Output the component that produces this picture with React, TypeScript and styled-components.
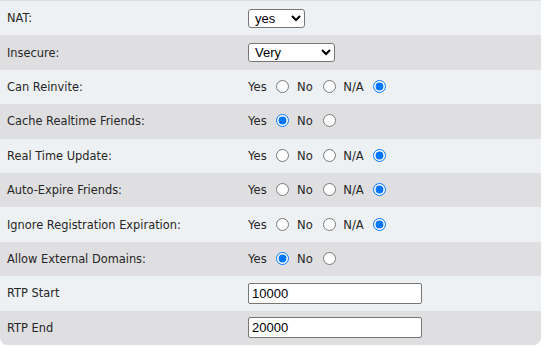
import styled, { createGlobalStyle } from 'styled-components';
import React from 'react';

const Global = createGlobalStyle`
  html, body { margin: 0; padding: 0; background: #fff; }
  body { font-family: "DejaVu Sans", Verdana, sans-serif; }
`

const Card = styled.div`
  width: 541px;
  padding-top: 1px;
  background: #dfdfe1;
  border-radius: 0 0 8px 8px;
  overflow: hidden;
`

const Row = styled.div<{ $alt: boolean }>`
  display: grid;
  grid-template-columns: 248px 1fr;
  align-items: center;
  height: 34.4px;
  background: ${p => (p.$alt ? '#dfdfe1' : '#eef1f3')};
`

const Label = styled.div`
  padding-left: 7px;
  font-size: 11.4px;
  color: #262626;
`

const Field = styled.div`
  font-size: 11.6px;
  line-height: 16px;
  color: #262626;
  white-space: nowrap;
  > input[type='radio'] {
    width: 13px;
    height: 13px;
    margin: 0 4px 0 6px;
    vertical-align: -2px;
  }
  > select, > input[type='text'] {
    vertical-align: middle;
  }
`

const Select = styled.select<{ $w: number }>`
  width: ${p => p.$w}px;
  height: 19px;
  font-family: "Liberation Sans", Arial, sans-serif;
  font-size: 13px;
  color: #000;
  border: 1px solid #767676;
  border-radius: 3px;
  background: #fff;
  padding: 0 0 0 2px;
`

const TextInput = styled.input`
  width: 174px;
  height: 21px;
  box-sizing: border-box;
  font-family: "Liberation Sans", Arial, sans-serif;
  font-size: 13px;
  color: #000;
  border: 1px solid #767676;
  border-radius: 2px;
  padding: 0 3px;
`

type RadioProps = { name: string, options: string[], checked: number }

const Radios: React.FC<RadioProps> = ({ name, options, checked }) => (
  <Field>
    {options.map((o, i) => (
      <React.Fragment key={o}>
        {i > 0 ? ' ' : ''}{o} <input type="radio" name={name} defaultChecked={i === checked} />
      </React.Fragment>
    ))}
  </Field>
)

const yna = ['Yes', 'No', 'N/A']
const yn = ['Yes', 'No']

export default function App() {
  return (
    <>
      <Global />
      <Card>
        <Row $alt={false}>
          <Label>NAT:</Label>
          <Field>
            <Select $w={57} defaultValue="yes">
              <option>yes</option>
              <option>no</option>
            </Select>
          </Field>
        </Row>
        <Row $alt>
          <Label>Insecure:</Label>
          <Field>
            <Select $w={87} defaultValue="Very">
              <option>Very</option>
              <option>Port</option>
              <option>No</option>
            </Select>
          </Field>
        </Row>
        <Row $alt={false}>
          <Label>Can Reinvite:</Label>
          <Radios name="reinvite" options={yna} checked={2} />
        </Row>
        <Row $alt>
          <Label>Cache Realtime Friends:</Label>
          <Radios name="cache" options={yn} checked={0} />
        </Row>
        <Row $alt={false}>
          <Label>Real Time Update:</Label>
          <Radios name="rtupdate" options={yna} checked={2} />
        </Row>
        <Row $alt>
          <Label>Auto-Expire Friends:</Label>
          <Radios name="autoexpire" options={yna} checked={2} />
        </Row>
        <Row $alt={false}>
          <Label>Ignore Registration Expiration:</Label>
          <Radios name="ignorereg" options={yna} checked={2} />
        </Row>
        <Row $alt>
          <Label>Allow External Domains:</Label>
          <Radios name="extdomains" options={yn} checked={0} />
        </Row>
        <Row $alt={false}>
          <Label>RTP Start</Label>
          <Field>
            <TextInput type="text" defaultValue="10000" />
          </Field>
        </Row>
        <Row $alt>
          <Label>RTP End</Label>
          <Field>
            <TextInput type="text" defaultValue="20000" />
          </Field>
        </Row>
      </Card>
    </>
  )
}
